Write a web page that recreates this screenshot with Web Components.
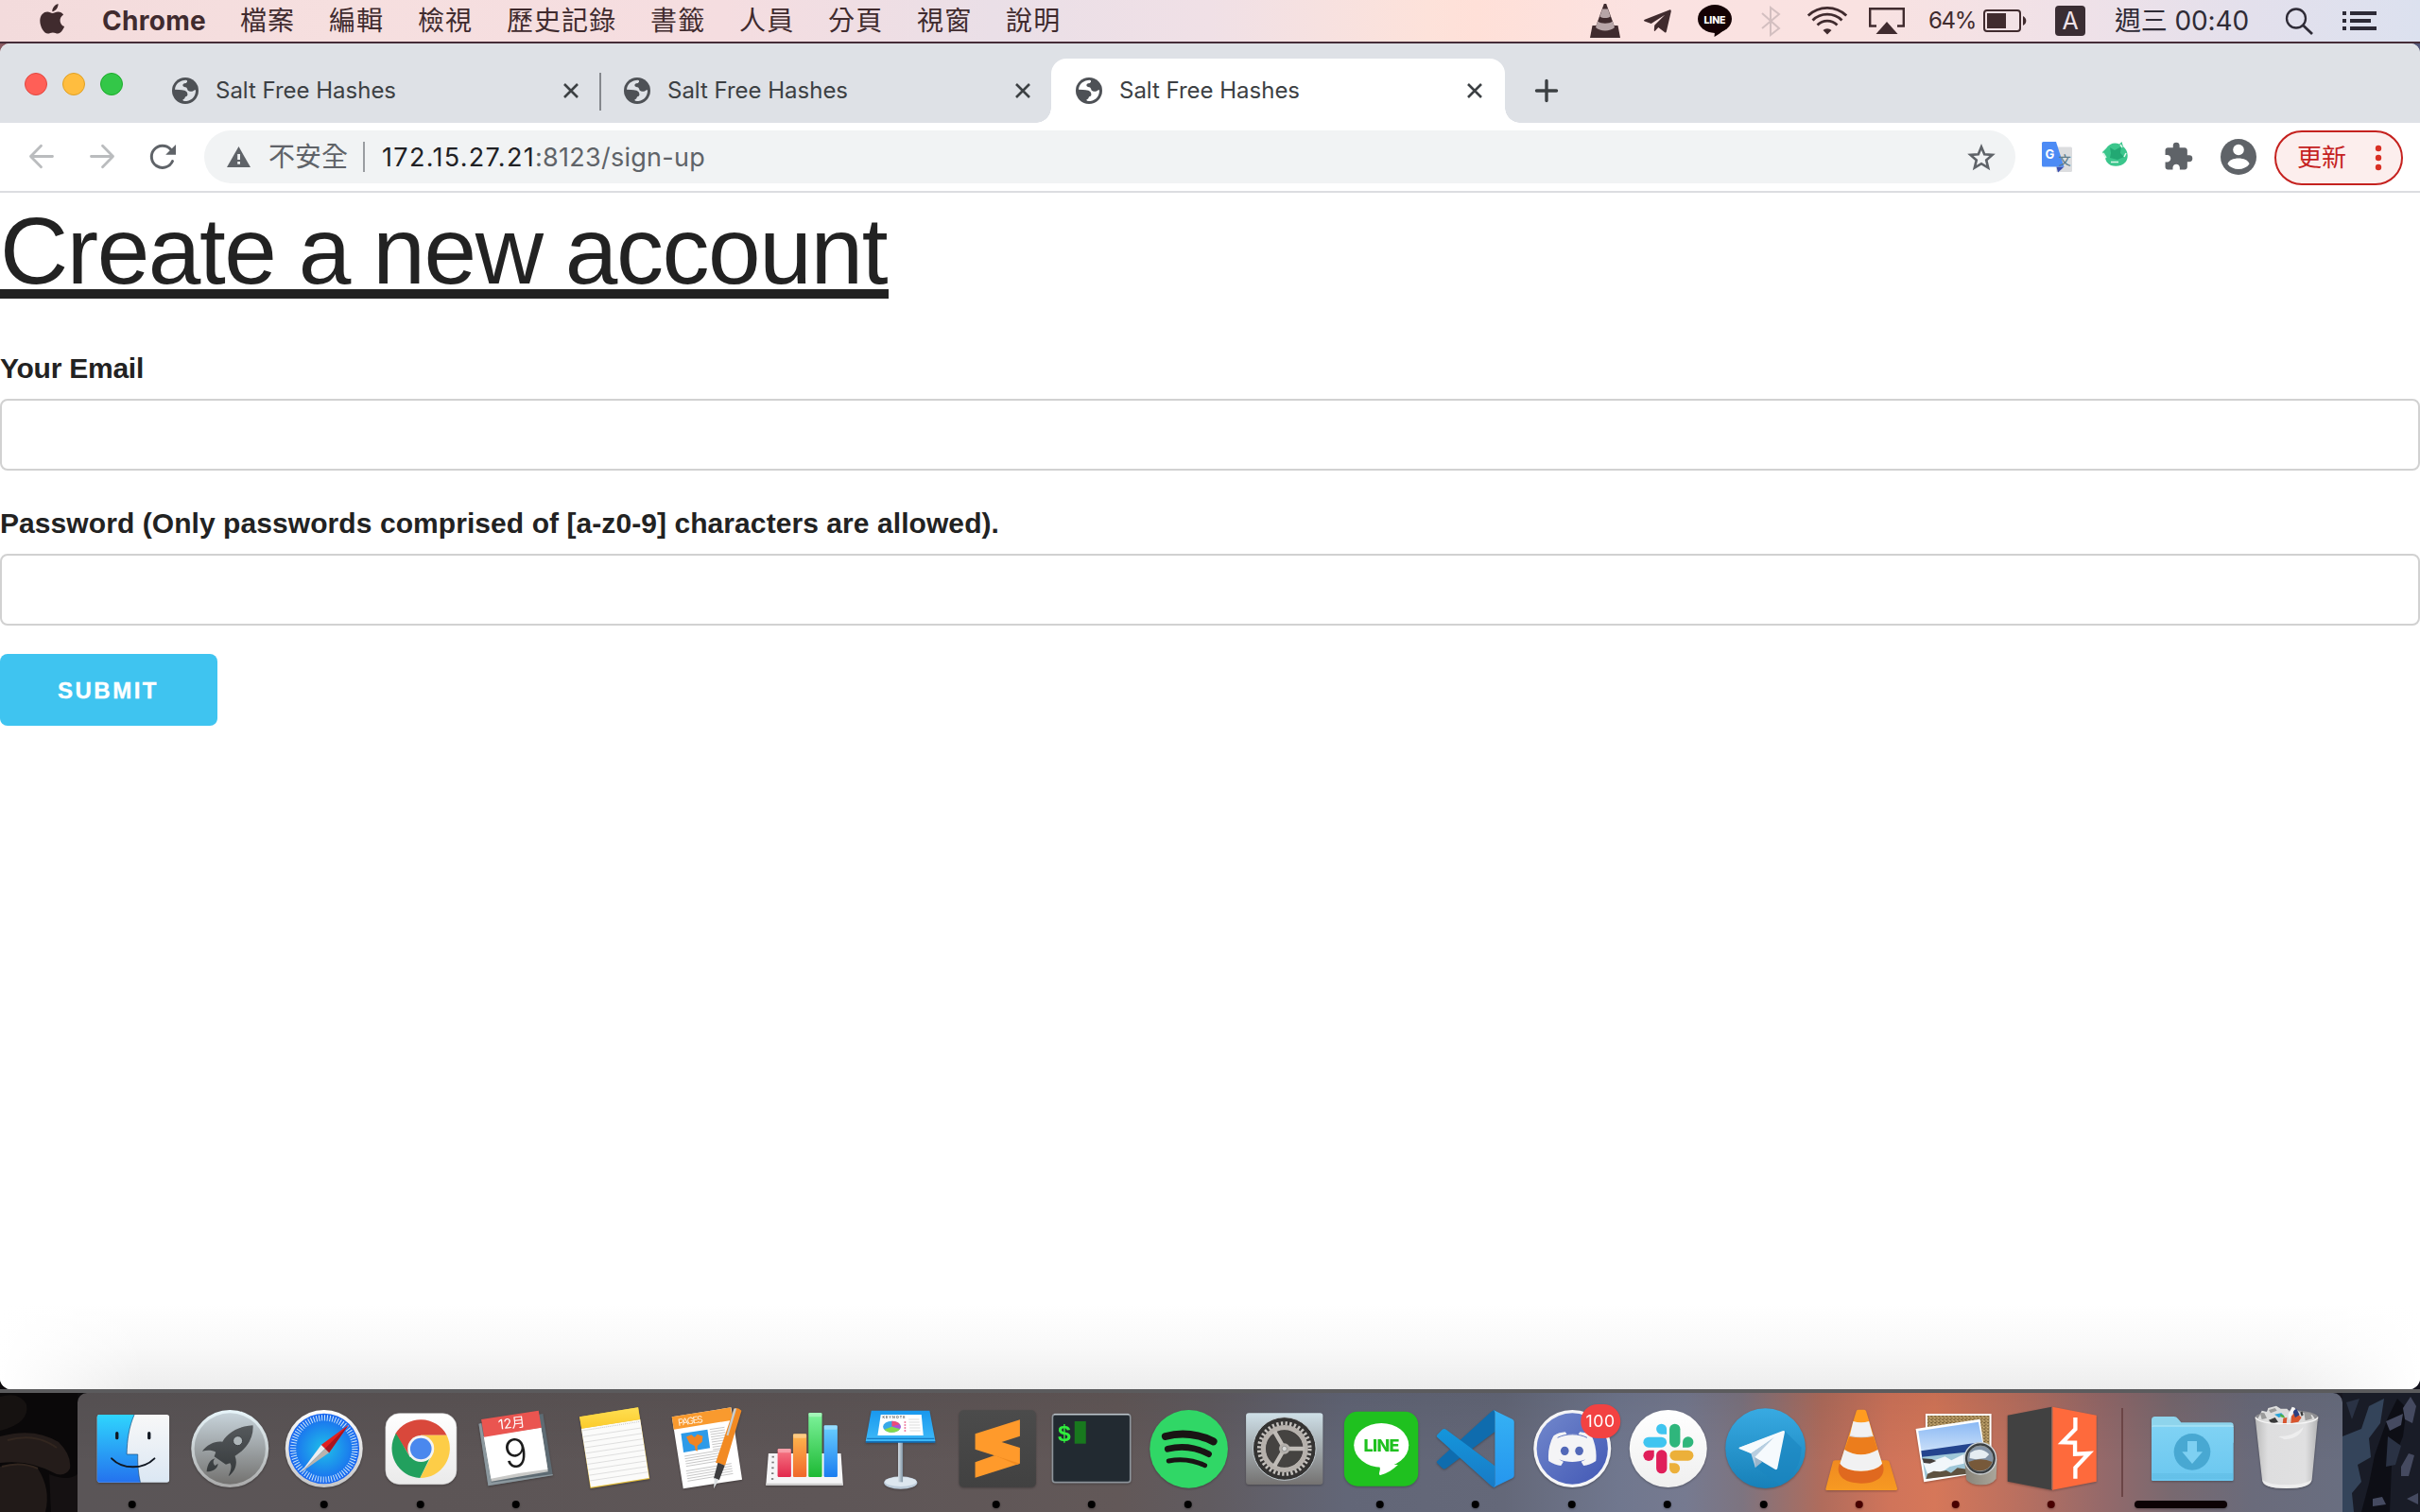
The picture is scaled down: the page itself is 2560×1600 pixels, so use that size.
<!DOCTYPE html>
<html lang="zh-Hant">
<head>
<meta charset="utf-8">
<title>Salt Free Hashes</title>
<style>
html,body{margin:0;padding:0;width:2560px;height:1600px;overflow:hidden;background:#15131a;font-family:Inter,"Noto Sans CJK TC",sans-serif}
</style>
</head>
<body>
<desk-top>
  <menu-bar></menu-bar>
  <browser-window>
    <tab-strip slot="tabs">
      <browser-tab>Salt Free Hashes</browser-tab>
      <browser-tab class="second">Salt Free Hashes</browser-tab>
      <browser-tab class="active">Salt Free Hashes</browser-tab>
    </tab-strip>
    <tool-bar slot="toolbar"></tool-bar>
    <sign-up-form>
      <span slot="title">Create a new account</span>
      <form-field><fit-label w="152">Your Email</fit-label></form-field>
      <form-field><fit-label w="1057">Password (Only passwords comprised of [a-z0-9] characters are allowed).</fit-label></form-field>
    </sign-up-form>
  </browser-window>
  <app-dock></app-dock>
</desk-top>

<script>
const define = (name, html, setup) => customElements.define(name, class extends HTMLElement {
  connectedCallback() {
    if (this.shadowRoot) return;
    this.attachShadow({mode: 'open'}).innerHTML = typeof html === 'function' ? html(this) : html;
    if (setup) setup(this);
  }
});

/* Text fitting waits in a queue until every element is defined and styled. */
const fits = [];
const textWidth = el => {
  const r = document.createRange();
  r.selectNodeContents(el);
  return r.getBoundingClientRect().width;
};
const fit = (source, target, w) => fits.push(() => {
  target.style.letterSpacing = ((w - textWidth(source)) / [...source.textContent].length) + 'px';
});

/* Label whose tracking is adjusted so that the run takes exactly w pixels. */
define('fit-label', el => `<style>:host{display:inline-block;white-space:nowrap;flex:none;width:${el.getAttribute('w')}px}</style><slot></slot>`, el => fit(el, el, +el.getAttribute('w')));

const globe = x => `<g transform="translate(${x - 196} 0) scale(.33333)"><circle cx="588" cy="288" r="42" fill="#4e5156"/><path fill="var(--hole,#dee1e6)" d="M555 284C556 267 571 254 591 254q5 1 3 6-3 5-9 5-5 1-5 6 0 4 5 5 8 0 9 5 1 6 5 8 8 3 14 0 4-4 8-3C622 303 611 319 592 321q-11 1-12-3 0-3 4-4 3-2 3-5 1-3 6-4 3-2 2-8-1-7-9-10-8-2-17-2z"/></g>`;

/* View boxes are given in desktop coordinates. */
const ICONS = {
  apple: ['42 0 26 44', `<path fill="#402b2e" d="M55.300 12.200c-.200-3.600 2.800-7.500 6.200-8.200.400 3.800-2.700 8-6.200 8.200zM55.500 13.900c1.600 0 3.400-1.500 6-1.500 2.400 0 4.300 1.200 5.600 3-5.200 3.200-4.400 10.600 1 12.700-1.200 3.100-3.900 7.500-6.900 7.500-2 0-2.900-1.200-5.300-1.200s-3.400 1.200-5.300 1.200C46.700 35.600 42.300 28.500 42.300 22c0-6.300 3.900-9.600 7.800-9.600 2.300 0 4 1.500 5.400 1.500z"/>`],
  vlcMenu: ['1682 0 32 44', `<path fill="#402b2e" d="M1696.800 4h2.400l8.300 23h4l2.500 13h-32l2.500-13h4z"/><path fill="#b7a5a7" d="M1695 9.500h6l2.600 8c-3 2-8.200 2-11.200 0zM1690 22.500c4 3 12 3 16 0l2 6.500c-4.500 4.500-15.500 4.500-20 0z"/>`],
  tgMenu: ['1738 0 30 44', `<path fill="#402b2e" d="M1766 10.500q2-.6 1.800 1.500l-5 21.500q-.6 1.600-2 .4l-6.500-5-3.500 3.800q-1 .7-1-1l.4-5 11-11-14.500 9.200-7-2.400q-1.800-.9.100-1.800z"/>`],
  lineMenu: ['1796 0 36 44', `<ellipse cx="1814" cy="20" rx="18" ry="15" fill="#150204"/><path fill="#150204" d="M1825 30c-3 4-8 7-11.500 9l.5-6z"/><text x="1814" y="24.500" text-anchor="middle" font-family="Inter" font-weight="800" font-size="10.500" textLength="23" fill="#fff">LINE</text>`],
  bt: ['1863 0 20 44', `<path fill="none" stroke="#d3bfc0" stroke-width="2" d="M1864 14l18 16-9 7V8l9 7-18 15"/>`],
  wifi: ['1912 0 42 44', `<g fill="none" stroke="#402b2e" stroke-width="2.800"><path d="M1912.800 16.500a29 29 0 0 1 40.400 0M1917.500 21.500a22 22 0 0 1 31 0M1922.500 26.500a15 15 0 0 1 21 0"/></g><path fill="#402b2e" d="M1928.500 32a6.500 6.500 0 0 1 9 0l-4.500 4.500z"/>`],
  airplay: ['1977 0 38 44', `<path fill="none" stroke="#402b2e" stroke-width="2.400" d="M1985 27.500h-6.800V9.200h35.600v18.300h-6.800"/><path fill="#402b2e" d="M1996 23l11.500 13h-23z"/>`],
  battery: ['2098 0 43 44', `<rect x="2099" y="11" width="38" height="22" rx="3" fill="none" stroke="#402b2e" stroke-width="2"/><path fill="#402b2e" d="M2102 14h20v16h-20zM2140 17c4.500 2 4.500 8 0 10z"/>`],
  inputA: ['2174 0 32 44', `<rect x="2174" y="6" width="32" height="32" rx="4" fill="#3a2d33"/><text x="2190" y="31" text-anchor="middle" font-family="Inter" font-size="25" fill="#f0e2e8">A</text>`],
  search: ['2418 0 29 44', `<circle cx="2429" cy="19.500" r="10" fill="none" stroke="#2e2b36" stroke-width="2.300"/><path stroke="#2e2b36" stroke-width="2.800" d="M2436 26.500l10 9.500"/>`],
  list: ['2478 0 36 44', `<path fill="#2c2a36" d="M2478 12h4v4h-4zM2486 12h28v4h-28zM2478 20h4v4h-4zM2486 20h22v4h-22zM2478 28h4v4h-4zM2486 28h28v4h-28z"/>`],
  globe: ['182 62 28 68', globe(196)],
  close: ['596 62 16 68', `<path stroke="#3c4043" stroke-width="2.600" d="M597 89l14 14M611 89l-14 14"/>`],
  plus: ['1624 62 24 68', `<path stroke="#3c4043" stroke-width="3.400" stroke-linecap="round" d="M1636 85.500v21M1625.500 96h21"/>`],
  back: ['30 130 28 72', `<path fill="none" stroke="#babcbe" stroke-width="2.800" stroke-linecap="round" stroke-linejoin="round" d="M55.500 165.500H32.500M43.500 154.300l-11 11.200 11 11.200"/>`],
  forward: ['94 130 28 72', `<path fill="none" stroke="#babcbe" stroke-width="2.800" stroke-linecap="round" stroke-linejoin="round" d="M96.500 165.500h23M108.500 154.300l11 11.200-11 11.200"/>`],
  reload: ['158 130 29 72', `<path fill="none" stroke="#5f6368" stroke-width="3" stroke-linecap="round" d="M182.500 170.500a11.600 11.600 0 1 1-2-12.500"/><path fill="#5f6368" d="M186 153v10.800h-10.800z"/>`],
  warn: ['240 130 25 72', `<path fill="#5f6368" d="M252.500 155l12.500 22h-25z"/><path fill="#f1f3f4" d="M251.200 163h2.800v6h-2.800zM251.200 171h2.800v2.800h-2.800z"/>`],
  star: ['2082 130 29 72', `<path fill="none" stroke="#5f6368" stroke-width="2.600" d="M2096 155.500l3.200 7.700 8.400.7-6.400 5.500 2 8.200-7.200-4.400-7.200 4.400 2-8.200-6.400-5.500 8.400-.7z"/>`],
  translate: ['2160 130 32 72', `<path fill="#dcdddf" d="M2172 155.500h18.500q1.500 0 1.500 1.500v23.500q0 1.500-1.500 1.500h-15z"/><path fill="#3a4fb0" d="M2175.500 176.500h8l-6.500 6z"/><path fill="#4c8bf5" d="M2161.500 150h13.500l8.500 26.500h-22q-1.500 0-1.500-1.500v-23.500q0-1.500 1.500-1.500z"/><text x="2163.500" y="167.500" font-family="Inter" font-weight="700" font-size="13" fill="#fff">G</text><text x="2177.800" y="174" font-family="Noto Sans CJK TC" font-weight="500" font-size="13" fill="#607d8b">文</text>`],
  green: ['2224 130 28 72', `<path fill="#3bc68c" d="M2228 157c3-5 9-7 14-4.500l2.500-2.500 1.500 5c5 4 6 11 3 16-4 5-11 5.500-16 4-4-2-6-5-6-9l-3-5z"/><path fill="#22a873" d="M2232 156l5 3 7-4-1 7 4 4-7 3-8-2 1-5z"/><path stroke="#d9f6e8" stroke-width="1.600" fill="none" d="M2225 162l3 5M2233 171.500h8M2247 166l2-4M2243 153l2 3"/>`],
  puzzle: ['2290 130 29 72', `<path fill="#5f6368" transform="translate(2287.800 149.300) scale(1.370)" d="M20.500 11H19V7c0-1.100-.9-2-2-2h-4V3.500a2.500 2.500 0 0 0-5 0V5H4c-1.100 0-2 .9-2 2v3.800h1.500c1.500 0 2.700 1.200 2.700 2.700S5 16.200 3.500 16.200H2V20c0 1.100.9 2 2 2h3.800v-1.500c0-1.500 1.200-2.700 2.700-2.700s2.700 1.200 2.700 2.700V22H17c1.100 0 2-.9 2-2v-4h1.500a2.500 2.500 0 0 0 0-5z"/>`],
  avatar: ['2349 130 38 72', `<circle cx="2368" cy="166" r="19" fill="#5f6368"/><circle cx="2368" cy="158.500" r="5.800" fill="#fff"/><path fill="#fff" d="M2356.500 173.500c2-8 21-8 23 0-5 7.300-18 7.300-23 0z"/>`],
  dots: ['2512 138 8 56', `<g fill="#d93025"><circle cx="2516" cy="156" r="3.200"/><circle cx="2516" cy="166" r="3.200"/><circle cx="2516" cy="176" r="3.200"/></g>`]
};

define('ui-icon', el => {
  const [vb, body] = ICONS[el.getAttribute('name')];
  const [, , w, h] = vb.split(' ');
  return `<style>:host{display:block;flex:none;width:${w}px;height:${h}px}svg{display:block;overflow:visible}</style><svg width="${w}" height="${h}" viewBox="${vb}">${body}</svg>`;
});

define('desk-top', `<style>
:host{display:flex;flex-direction:column;width:2560px;height:1600px;background:linear-gradient(90deg,#8a5a60 0,#402a35 5%,#2b2633 60%,#53587a 100%)}
</style><slot></slot>`);

define('menu-bar', `<style>
:host{display:flex;align-items:center;height:44px;flex:none;color:#402b2e;font:27px/44px Inter,"Noto Sans CJK TC",sans-serif;
 background:linear-gradient(90deg,#f3dbdc 0,#f6dfdf 14%,#f5dde0 30%,#eadfe7 41%,#f0e0e6 50%,#fde2da 59%,#ffe0d8 61%,#fbe2e1 68%,#f9e2e1 77%,#efe1e8 86%,#e3e0ec 93%,#dce1ef 100%);border-bottom:2px solid #452c38}
.left,.right{display:flex;height:44px}.left{padding-left:42px}.right{margin-left:auto;padding-right:46px}
.app{font-weight:700;font-size:28px;margin:0 36px 0 40px}
nav{display:flex;gap:35.900px}nav span{letter-spacing:1.050px;font-size:28px}
.pct{font-size:24px;margin-left:25px}.clock{margin-left:31px;color:#2f2b36;font-size:28px}
</style>
<div class="left"><ui-icon name="apple"></ui-icon><fit-label class="app" w="110">Chrome</fit-label>
<nav><span>檔案</span><span>編輯</span><span>檢視</span><span>歷史記錄</span><span>書籤</span><span>人員</span><span>分頁</span><span>視窗</span><span>說明</span></nav></div>
<div class="right"><ui-icon name="vlcMenu"></ui-icon><ui-icon name="tgMenu" style="margin-left:24px"></ui-icon><ui-icon name="lineMenu" style="margin-left:28px"></ui-icon><ui-icon name="bt" style="margin-left:31px"></ui-icon><ui-icon name="wifi" style="margin-left:29px"></ui-icon><ui-icon name="airplay" style="margin-left:23px"></ui-icon><fit-label class="pct" w="50">64%</fit-label><ui-icon name="battery" style="margin-left:8px"></ui-icon><ui-icon name="inputA" style="margin-left:33px"></ui-icon><fit-label class="clock" w="142">週三 00:40</fit-label><ui-icon name="search" style="margin-left:39px"></ui-icon><ui-icon name="list" style="margin-left:31px"></ui-icon></div>`);

define('browser-window', `<style>
:host{display:flex;flex-direction:column;height:1424px;flex:none;background:#fff;border-radius:10px 10px 12px 12px;overflow:hidden;position:relative;z-index:1}
::slotted(sign-up-form){flex:1}
.shade{height:90px;margin-top:-90px;background:linear-gradient(90deg,#fff 0,#fff0 6%,#fff0 94%,#fff 100%),linear-gradient(#fff0,#f9f9f9 50%,#ededed)}
</style><slot name="tabs"></slot><slot name="toolbar"></slot><slot></slot><div class="shade"></div>`);

define('tab-strip', `<style>
:host{display:flex;height:84px;flex:none;background:#dee1e6;align-items:flex-end}
.lights{display:flex;gap:16px;padding-left:26px;width:132px;height:82px;align-items:center;align-self:flex-start;padding-top:4px;box-sizing:border-box}
i{width:24px;height:24px;border-radius:50%;box-sizing:border-box;flex:none}
.r{background:#ff5f57;border:1px solid #e2463f}.y{background:#ffbd3f;border:1px solid #dfa023}.g{background:#33c748;border:1px solid #1dad2b}
.tabs{display:flex;padding-left:24px}
ui-icon{margin-left:32px}
</style><div class="lights"><i class="r"></i><i class="y"></i><i class="g"></i></div><div class="tabs"><slot></slot></div><ui-icon name="plus"></ui-icon>`);

define('browser-tab', `<style>
:host{display:flex;width:478px;height:68px;align-items:center;box-sizing:border-box;padding-left:26px;color:#3c4043;font:24px/67px Inter,sans-serif;position:relative}
:host(.second){padding-left:24px;border-left:2px solid;border-image:linear-gradient(transparent 15px,#85888d 15px,#85888d 55px,transparent 55px) 0 0 0 2}
:host(.active){width:480px;background:#fff;border-radius:16px 16px 0 0;--hole:#fff}
:host(.active)::before,:host(.active)::after{content:"";position:absolute;bottom:0;width:16px;height:16px}
:host(.active)::before{left:-16px;background:radial-gradient(circle at 0 0,transparent 15.500px,#fff 16px)}
:host(.active)::after{right:-16px;background:radial-gradient(circle at 100% 0,transparent 15.500px,#fff 16px)}
.t{margin-left:18px;width:192px;white-space:nowrap;height:68px;line-height:67px}
.x{margin-left:176px}
</style><ui-icon name="globe"></ui-icon><span class="t"><slot></slot></span><ui-icon class="x" name="close"></ui-icon>`, el => fit(el, el.shadowRoot.querySelector('.t'), 191));

define('tool-bar', `<style>
:host{display:flex;height:72px;flex:none;align-items:center;background:#fff;border-bottom:2px solid #dcdde1;padding-left:30px;font:27px/57px Inter,"Noto Sans CJK TC",sans-serif;box-sizing:content-box}
.box{display:flex;align-items:center;width:1916px;height:56px;margin-left:29px;background:#f1f3f4;border-radius:28px;box-sizing:border-box;padding-left:24px}
.ns{color:#5f6368;font-size:28px;margin-left:19px}
.sep{width:2px;height:32px;background:#9a9da1;margin:0 18px 0 16px}
.host{color:#202124}.path{color:#5f6368}
.host,.path{height:56px;line-height:58px}
.star{margin-left:auto;margin-right:21px}
.upd{display:flex;align-items:center;width:136px;height:58px;margin:2px 0 0 19px;box-sizing:border-box;border:2px solid #c5221f;border-radius:29px;background:#fceeed;color:#c5221f;padding-left:22px;font:26px/52px Inter,"Noto Sans CJK TC",sans-serif}
</style><ui-icon name="back"></ui-icon><ui-icon name="forward" style="margin-left:36px"></ui-icon><ui-icon name="reload" style="margin-left:36px"></ui-icon>
<div class="box"><ui-icon name="warn"></ui-icon><fit-label class="ns" w="84">不安全</fit-label><span class="sep"></span><fit-label class="host" w="162">172.15.27.21</fit-label><fit-label class="path" w="180">:8123/sign-up</fit-label><ui-icon class="star" name="star"></ui-icon></div>
<ui-icon name="translate" style="margin-left:28px"></ui-icon><ui-icon name="green" style="margin-left:32px"></ui-icon><ui-icon name="puzzle" style="margin-left:38px"></ui-icon><ui-icon name="avatar" style="margin-left:30px"></ui-icon>
<div class="upd"><fit-label w="52">更新</fit-label><ui-icon name="dots" style="margin-left:30px"></ui-icon></div>`);

define('sign-up-form', `<style>
:host{display:block;font-family:"Liberation Sans",sans-serif;color:#222}
h1{margin:0;height:168px;padding-top:11px;box-sizing:border-box;font-size:100px;line-height:100px;font-weight:400;white-space:nowrap;word-spacing:-2px}
.u{display:block;height:91px;border-bottom:10px solid #222;width:940px}
button{display:block;margin:30px 0 0;width:230px;height:76px;border:0;border-radius:8px;background:#3fc4f0;color:#fff;font:700 24px/76px "Liberation Sans",sans-serif;padding:1px 0 0 61px;text-align:left;-webkit-text-stroke:.4px #fff}
</style><h1><span class="u"><slot name="title"></slot></span></h1><slot></slot><button><fit-label w="107">SUBMIT</fit-label></button>`, el => fit(el.querySelector('[slot=title]'), el.shadowRoot.querySelector('.u'), 938));

define('form-field', `<style>
:host{display:block;height:126px;margin-bottom:38px;font:700 30px/36px "Liberation Sans",sans-serif}
:host(:last-of-type){margin-bottom:0}
label{display:block;height:50px}
input{display:block;width:100%;height:76px;box-sizing:border-box;border:2px solid #d1d1d1;border-radius:8px;background:#fff;margin:0}
</style><label><slot></slot></label><input>`);

/* Dock drawings, at three units to the pixel; ox is the left edge of each drawing's origin. */
const P = (fill, d, more = '') => `<path fill="${fill}" d="${d}" ${more}/>`;
const LG = (id, a, b, v = 'x2="0" y2="1"') => `<linearGradient id="${id}" ${v}><stop stop-color="${a}"/><stop offset="1" stop-color="${b}"/></linearGradient>`;
const lines = (x1, y1, x2, y2, n, dx, dy, c, w) => Array.from({length: n}, (_, i) => `<path stroke="${c}" stroke-width="${w}" d="M${x1 + dx * i} ${y1 + dy * i}L${x2 + dx * i} ${y2 + dy * i}"/>`).join('');
const APPS = [
 [0, 1, LG('a', '#2fd5fd', '#2472ee') + LG('b', '#f8f8f8', '#dbe7f3') + `<rect x="309" y="111" width="229" height="215" rx="8" fill="url(#b)"/>` + P('url(#a)', 'M317 111H427C410 150 404 190 403 237H438C437 270 440 300 446 326H317q-8 0-8-8V119q0-8 8-8z') + `<path d="M427 111C410 150 404 190 403 237H438C437 270 440 300 446 326" fill="none" stroke="#174a78" stroke-width="2"/><path d="M355 250c35 36 100 36 136 0" stroke="#111822" stroke-width="6" fill="none" stroke-linecap="round"/><path d="M372 170v15M474 170v15" stroke="#111822" stroke-width="10" stroke-linecap="round"/>`],
 [0, 0, LG('a', '#c7d3da', '#737270') + LG('b', '#e8f6fb', '#a9a9a9') + LG('c','#55595c','#34383a')+`<circle cx="729" cy="219" r="123" fill="url(#b)"/><circle cx="729" cy="219" r="113" fill="url(#a)"/>` + P('url(#c)', 'M802 145c-40 2-78 20-97 52-25-3-46 8-64 30 17-4 33-3 43 3l-5 14 37 25 13-4c8 10 1 28-5 42 23-17 30-42 21-65 35-20 60-56 57-97zM682 250c-18 4-25 22-27 42 20-1 36-10 36-26l-9 7c-7-6-8-16 0-23z') + `<circle cx="754" cy="194" r="15" fill="#aeb6b9" stroke="#3b3f42" stroke-width="3"/>`],
 [0, 1, `<radialGradient id="a"><stop stop-color="#1fc0e8"/><stop offset="1" stop-color="#1a66f0"/></radialGradient>` + LG('b','#fdfdfd','#c6c6c6') + `<circle cx="1029" cy="219" r="123" fill="url(#b)"/><circle cx="1029" cy="219" r="112" fill="url(#a)"/><circle cx="1029" cy="219" r="98" fill="none" stroke="#cfe6fa" stroke-width="19" stroke-dasharray="3 5.552"/>` + P('#e02020', 'M1107 143L1020 207l25 25z') + P('#a81420', 'M1107 143L1032 219l13 13z') + P('#eeeef0', 'M955 295L1020 207l12 12z') + P('#b9b3ae', 'M955 295L1045 232l-13-13z')],
 [0, 1, LG('a','#fff','#eaeaea') + `<rect x="1223" y="107" width="225" height="225" rx="44" fill="url(#a)" stroke="#d6d6d6" stroke-width="2"/>` + P('#d9483b', 'M1254 172A94 94 0 0 1 1417 176H1335L1298 240z') + P('#fdcd47', 'M1417 176A94 94 0 0 1 1332 312L1370 240 1335 176z') + P('#22a05e', 'M1256 170A94 94 0 0 0 1332 312L1365 245H1300z') + `<circle cx="1335" cy="219" r="42" fill="#f4f4f4"/><circle cx="1335" cy="219" r="34" fill="#4a88ee"/>`],
 [480, 1, P('#5e6b73', 'M80 140L284 108 315 303 110 337z') + P('#8c989e','M80 140L88 138 120 326 315 300 315 304 110 337z') + P('#c9c9c7', 'M96 180L278 152 300 292 120 323z') + P('#fff', 'M96 180L278 152 299 284q-90 10-180 30z') + P('#ea5550', 'M88 126L270 98 279 152 97 182z') + `<g transform="rotate(-7 186 150)"><text x="186" y="153" text-anchor="middle" font-family="Inter,'Noto Sans CJK TC'" font-size="43" textLength="86" fill="#fff">12月</text></g><g transform="rotate(-7 198 235)"><text x="198" y="278" text-anchor="middle" font-family="Inter" font-weight="300" font-size="125" fill="#1c1c1c">9</text></g>`],
 [480, 0, LG('a','#ffdf52','#fbcb2c') + P('#e2bd3a', 'M399 118L585 88 621 315 433 345z') + P('#fbfbfa', 'M404 155L591 126 619 312 434 341z') + P('url(#a)', 'M398 118L584 88 590 126 405 155z') + `<path d="M406 162l184-29" stroke="#aaa" stroke-width="2" stroke-dasharray="3 3"/>` + lines(410, 181, 594, 153, 9, 2.7, 17.5, '#d0d0d0', 2)],
 [480, 0, P('#fff', 'M693 118L881 88 916 317 729 346z') + P('#f99a2e', 'M693 118L880 88 886 128 699 158z') + `<g transform="rotate(-8.500 752 130)"><text x="752" y="141" text-anchor="middle" font-family="Inter" font-size="30" textLength="80" fill="#fff3e2">PAGES</text></g>` + P('#2e9be8', 'M722 171L806 158 814 217 730 231z') + P('#f08422', 'M741 180l14-5 10 8 9-10 17 6-2 18-15 13v17l-6-3-3-14-16-8-10-20z') + lines(813, 158, 860, 151, 9, 1.3, 8, '#aaa', 2) + lines(733, 243, 860, 222, 5, 1.3, 8, '#aaa', 2) + lines(738, 290, 882, 266, 5, 1.3, 8, '#aaa', 2) + P('#f28a22', 'M890 92q12-6 24 6L862 272l-30-9z') + P('#c5ced3','M890 92q4-3 8 0L872 178l-6-2z') + P('#3d3d3f', 'M839 263l22 9-18 47-17-6z') + P('#dde1e3', 'M828 312l14 5-16 29z')],
 [480, 0, P('#f5f5f6', 'M998 234H1228L1235 335H990z') + P('#ccc','M990 329H1235v6H990z') + [[1027,219,'#f77a86','#e2284c'],[1076,172,'#ffb84f','#f0682a'],[1125,105,'#7ef39c','#1db934'],[1174,145,'#6bd0ff','#1a7df0']].map(([x,y,a,b],i)=>LG('n'+i,a,b)+`<rect x="${x}" y="${y}" width="43" height="${309-y}" rx="4" fill="url(#n${i})"/><rect x="${x+1}" y="${y}" width="41" height="13" rx="3" fill="#fff" opacity=".3"/>`).join('') + lines(1009,245,1016,245,5,-.5,17.500,'#777',5)],
 [480, 0, LG('a','#1998ee','#3db9f8') + LG('b','#d6e0e8','#8195a5','') + `<ellipse cx="1419" cy="327" rx="53" ry="20" fill="#bccbd9"/><ellipse cx="1419" cy="324" rx="50" ry="15" fill="#dde7ef"/><rect x="1411" y="195" width="15" height="130" fill="url(#b)"/>` + P('url(#a)', 'M1326 98H1511L1529 195H1308z') + P('#116fb8','M1308 195H1529v5H1308z') + `<path d="M1312 187H1526" stroke="#167dc5" stroke-width="4"/>` + P('#fff', 'M1356 111H1485L1491 177H1346z') + `<text x="1361" y="123" font-family="Inter" font-weight="600" font-size="11" textLength="72" fill="#555">KEYNOTE</text><ellipse cx="1391" cy="149" rx="28" ry="18" fill="#38a9e8"/><path fill="#ee4a7a" d="M1391 149v-18a28 18 0 0 1 26 11z"/><path fill="#b24fd4" d="M1391 149l26-7a28 18 0 0 1 0 14z"/><path fill="#86d84a" d="M1391 149l26 8a28 18 0 0 1-50 1z"/><path stroke="#ea5b87" stroke-width="5" stroke-dasharray="4 5" d="M1433 133v34"/>` + lines(1444, 126, 1478, 126, 5, 1, 9, '#ccc', 2)],
 [960, 1, LG('a','#4b4b4b','#414141') + `<rect x="163" y="97" width="244" height="244" rx="14" fill="url(#a)"/>` + P('#ff9a2b', 'M214 262L276 240 356 266 214 311z') + P('#f18b20','M276 240L300 232 356 266 345 270z') + P('#ff9a2b', 'M214 172L356 127V179L298 198 356 216V266L214 221z')],
 [960, 1, `<rect x="461" y="110" width="247" height="216" rx="9" fill="#222a31" stroke="#8d949b" stroke-width="5"/><path d="M466 110H703" stroke="#bcc5cb" stroke-width="4"/><text x="476" y="194" font-family="Liberation Mono" font-weight="700" font-size="74" fill="#30ee3d">$</text><rect x="531" y="132" width="36" height="71" fill="#18781e"/>`],
 [960, 1, `<circle cx="892" cy="220" r="124" fill="#30d766"/><g fill="none" stroke="#191414" stroke-linecap="round"><path stroke-width="24" d="M818 180c52-14 108-7 152 16"/><path stroke-width="20" d="M825 220c44-11 90-5 130 16"/><path stroke-width="15" d="M828 258c40-8 78-3 115 14"/></g>`],
 [960, 0, LG('a','#cfe0e8','#747271') + `<rect x="1075" y="106" width="244" height="227" rx="9" fill="url(#a)"/><circle cx="1197" cy="219" r="100" fill="#343332" stroke="#c2cbd0" stroke-width="3"/><circle cx="1197" cy="219" r="80" fill="none" stroke="#c4c1bd" stroke-width="13" stroke-dasharray="7 6.963"/><circle cx="1197" cy="219" r="67" fill="none" stroke="#b6b1ac" stroke-width="16"/><circle cx="1197" cy="219" r="58" fill="#454341"/><g stroke="#c0bcb7" stroke-width="13"><path d="M1197 219H1261M1197 219L1165 164M1197 219L1165 274"/></g><circle cx="1197" cy="219" r="17" fill="#b4b0ac"/><circle cx="1197" cy="219" r="8" fill="#d8d8d6" stroke="#777" stroke-width="2"/>`],
 [1440, 1, `<rect x="-55" y="101" width="235" height="237" rx="42" fill="#1fc11f"/><ellipse cx="63" cy="208" rx="87" ry="70" fill="#fff"/><path fill="#fff" d="M56 270h60c-15 15-35 27-56 33q-5 0-4-5l3-14q1-8-5-14z"/><text x="64" y="229" text-anchor="middle" font-family="Inter" font-weight="800" font-size="54" textLength="114" fill="#1fc11f">LINE</text>`],
 [1440, 1, LG('a','#35b1f4','#2596ee') + LG('b','#1496dc','#187ac5')+ P('#0f6cae','M242 258L412 103q6-6 13-7V165L270 281q-7 5-13-1l-14-14q-5-5-1-8z') + P('url(#b)', 'M242 183q-4-5 1-9l14-15q7-5 13-1L425 274V342q-7 0-13-6z') + P('url(#a)', 'M420 96L480 125q6 3 6 9V304q0 6-6 9L420 342q5-3 5-10V106q0-7-5-10z')],
 [1440, 1, LG('a','#7288cc','#4258b5','x2="1" y2="1"') + `<circle cx="669" cy="219" r="123" fill="#f5f5f7"/><circle cx="669" cy="219" r="113" fill="url(#a)"/><path fill="#f4f4f6" d="M610 178c12-8 24-11 37-12l5 8q18-3 36 0l5-8c13 1 25 4 37 12 13 26 17 56 14 80-13 9-27 14-39 15l-8-13q7-2 14-7c-25 11-60 11-84 0q7 5 14 7l-8 13c-12-1-26-6-39-15-3-24 1-55 16-80z"/><path fill="none" stroke="#6076c2" stroke-width="3" d="M622 184c28-14 66-14 94 0"/><ellipse cx="645" cy="226" rx="13" ry="14" fill="#5268b8"/><ellipse cx="691" cy="226" rx="13" ry="14" fill="#5268b8"/><rect x="696" y="78" width="126" height="108" rx="54" fill="#f24242"/><text x="758" y="151" text-anchor="middle" font-family="Inter" font-size="53" textLength="92" fill="#fff">100</text>`],
 [1440, 1, LG('a','#fff','#efefef') + `<circle cx="975" cy="219" r="123" fill="url(#a)"/><rect x="896" y="182" width="74" height="33" rx="16.500" fill="#3fc5f0"/><path fill="#3fc5f0" d="M970 173h-17a16.500 16.500 0 1 1 17-17z"/><rect x="979" y="140" width="34" height="75" rx="17" fill="#2fb67c"/><path fill="#2fb67c" d="M1021 215v-17a17 17 0 1 1 17 17z"/><rect x="937" y="223" width="34" height="75" rx="17" fill="#e01e5a"/><path fill="#e01e5a" d="M930 224v17a17 17 0 1 1-17-17z"/><rect x="980" y="224" width="75" height="33" rx="16.500" fill="#ecb03a"/><path fill="#ecb03a" d="M979 265h17a16.500 16.500 0 1 1-17 17z"/>`],
 [1440, 1, LG('a','#38aae2','#1780b8') + `<circle cx="1282" cy="218" r="127" fill="url(#a)"/>` + P('#1a86c0','M1343 163L1396 215Q1395 290 1330 335L1250 278z','opacity=".6"') + P('#cadbe9', 'M1198 216L1343 162 1236 234z') + P('#b8cee0','M1236 234L1310 183 1250 279z') + P('#f6fafd', 'M1199 215q-3 3 1 5l36 14 74-52-62 64 0 0 64 38q6 4 8-3l23-113q1-8-7-5z')+P('#9ab5cb','M1248 246L1272 261 1250 279z')],
 [1900, 1, LG('a','#ff9f1e','#ea6f1b') + LG('b','#f08a20','#f79a22')+ P('url(#b)', 'M117 262q1-6 8-6H288q7 0 9 6L322 346q1 5-4 5H99q-6 0-4-5z') + P('#e0691f','M142 262c-15 20-12 66 64 67s80-45 66-67z') + P('#ff9c20', 'M192 100q1-5 6-5h19q4 0 6 5l51 166c-20 32-115 32-134 0z') + P('#f1f1f2', 'M182 132q25 7 50 0l14 50q-38 8-76 0z')+ P('#d8d8da','M172 176q35 9 72 0l2 8q-38 8-76 0z') + P('#ec7d1c', 'M170 180q37 8 76 0l14 45q-49 25-106 0z') + P('#f1f1f2', 'M154 222q52 32 106 0l14 44c-20 32-115 32-134 0z')],
 [1900, 1, `<pattern id="p" width="12" height="10" patternUnits="userSpaceOnUse"><rect width="12" height="10" fill="#a68955"/><path fill="#4e3b1f" d="M1 1h3v3H1zM7 5h4v3H7z"/><path fill="#dec18a" d="M5 0h4v3H5zM1 6h4v3H1z"/></pattern>` + LG('a','#8ab9f5','#cadff8') + `<rect x="413" y="111" width="203" height="170" fill="url(#p)" stroke="#fff" stroke-width="6"/>` + P('#fff','M379 156L583 125 606 292 405 325z') + P('url(#a)', 'M387 163L578 134 591 200 397 228z') + P('#24448e', 'M396 226L588 198 592 225 400 254z') + P('#9fc7d8', 'M399 245L592 224 598 285 410 316z') + P('#f1f6fa','M402 262l40-8 30-10 20 12 40-20v30l-45 10-30 20-40 5z') + P('#5e5240', 'M412 315l4-16 20-9 20 2 20-4 15 8 20-16 30 4v15z')+P('#453f3c','M400 250l30 2 14 6-20 8-20-2z') + LG('c','#888479','#aaa69b','') + P('url(#c)', 'M533 250L540 318q15 17 48 16t46-20l3-62z') + `<circle cx="584" cy="250" r="50" fill="#3b4043" stroke="#ced4d7" stroke-width="4"/><circle cx="584" cy="250" r="40" fill="#8292a5" stroke="#8e9496" stroke-width="3"/>` + P('#e6edf2','M552 232q32-22 60 5l-12 12-30 4-20-4z') + P('#77593a','M546 261q40-16 76 0-10 28-40 28t-36-28z')],
 [1900, 1, P('#414141','M672 113L812 86V350L672 323z') + P('#fe6a3c','M814 86L954 113V323L814 350z') + `<path d="M813 88V348" stroke="#8a6a60" stroke-width="4"/><path d="M887 120V157L846 199 886 200V236L930 234 887 279V314" fill="none" stroke="#fff" stroke-width="13" stroke-linejoin="miter"/>`],
];
const folder = LG('a','#7fd2f4','#6bc7ef') + P('#8ed4ec','M228 128q0-11 11-11H299q8 0 13 7l10 12H479q9 0 9 9V200H228z') + P('#a9e2f5','M229 150q0-5 5-5H484q4 0 4 5z') + P('url(#a)','M228 155q0-6 6-6H482q6 0 6 6V317q0 4-4 4H232q-4 0-4-4z') + lines(229,300,487,300,3,0,6,'#58b4dd',2) + `<circle cx="357" cy="229" r="58" fill="#48a8d2"/>` + P('#7ed0f2','M342 195h30v34h18L357 267 325 229h17z');
const trash = `<linearGradient id="b"><stop stop-color="#bababa"/><stop offset=".2" stop-color="#dededf"/><stop offset=".8" stop-color="#e0e0e1"/><stop offset="1" stop-color="#b4b4b5"/></linearGradient>` + P('#8c8c90','M556 118q20-22 100-22t101 20v16H558z') + P('#dcdcdc','M572 112l6-14 16 4 4-12 26-7 14 9 20 0 8 10 12-14 22 16 18 2 20 6 10 14-6 18-160 4-20-20z') + P('#9a9a9a','M572 104l14 2 8 16-16 4zM600 96l20-6 6 8-20 8zM712 104l20 2 6 18-22 6z') + P('#3a3a3a','M600 128l20-8 10 14-20 6zM700 104l6-4 4 12-6 4z') + P('#28a3d8','M618 110l22-4 8 8-16 6z') + P('#50b03c','M636 108l12 6 4 8-14-4z') + P('#d8552e','M646 122l12-2-2 22-12 0zM672 116l12-14 20 18-10 14-24 4z') + P('#2d3f80','M676 100l12-8 10 20-14 8z') + P('#f6f6f6','M662 110l12-24 10 4-20 38z') + P('url(#b)','M557 121Q600 143 656 143T756 120L737 318q-6 27-81 27t-77-27z') + P('#f4f4f4','M580 318q20 16 76 16t80-16q-4 27-80 27t-76-27z','opacity=".7"') + P('#f6f6f6','M630 180q50 0 80-30-8 35-60 40z','opacity=".6"') + `<path d="M558 119c6 13 40 21 98 21s96-8 100-21" fill="none" stroke="#f8f8f8" stroke-width="4"/>`;
const cell = (x, w, ox, body) => `<svg width="${w}" height="126" viewBox="${x} 1474 ${w} 126"><g transform="translate(${ox} 1460) scale(.33333)">${body}</g></svg>`;

define('dock-item', el => {
  const i = el.getAttribute('item');
  let s;
  if (i === 'folder') s = cell(2258, 110, 2200, folder + '<rect x="174" y="384" width="294" height="24" rx="12" fill="#0c0204"/>');
  else if (i === 'trash') s = cell(2368, 100, 2200, trash);
  else {
    const [ox, run, body] = APPS[i];
    const x = 89.25 + i * 101.5;
    const dot = run ? `<circle cx="${(x + 50.75 - ox) * 3}" cy="396" r="12" fill="${i > 17 ? '#480000' : '#000'}"/>` : '';
    s = cell(x, 101.5, ox, body + dot);
  }
  return `<style>:host{display:flex;flex:none;height:126px}svg{display:block;overflow:visible;filter:drop-shadow(0 1px 1px #0004)}</style>${s}`;
});

define('app-dock', `<style>
:host{display:flex;flex:1;height:130px;margin-top:-12px;padding-top:12px;background:linear-gradient(90deg,#0d0b0d,#161620)}
.edge{display:block;width:82px;height:130px;flex:none}
.mid{flex:none;width:2396px;border-top:4px solid #5b5b5d;display:flex;box-sizing:border-box;height:130px}
.dock{display:flex;align-items:flex-start;width:2396px;height:126px;padding-left:7.250px;box-sizing:border-box;border-radius:10px 10px 0 0;
background:linear-gradient(#0001,#0000 60%),linear-gradient(90deg,#5a5557 0,#5c5556 15%,#5e5657 33%,#625858 46%,#605b60 50%,#626677 56%,#646879 63%,#70778e 68%,#767a90 71%,#7d7480 73.500%,#b06c5c 77%,#d0745a 80%,#d67759 82%,#bb705f 85.500%,#94696a 89.500%,#786970 92.500%,#6a6b7b 96%,#696e80 100%)}
.sep{width:2px;height:94px;margin:16px 12px 0 23.250px;background:#6b4546;flex:none}
</style>
<svg class="edge" viewBox="0 1470 82 130"><rect y="1470" width="82" height="130" fill="#0a0809"/><path fill="#161211" d="M0 1478q20-6 28 8 4 20-28 28z"/><path fill="#241c1a" d="M0 1520q36-10 62 6 14 14 12 28-4 8-14 6-28-16-60-12z"/><path fill="#211a18" d="M0 1552q20-6 40 2 14 22 8 46H0z"/><path fill="#151112" d="M52 1560q20 8 30 0v40H54z"/><path stroke="#32261f" stroke-width="2" fill="none" d="M8 1524q30-8 52 8M2 1552q20-6 38 2"/><rect y="1470" width="82" height="4" fill="#5b5b5d"/></svg>
<div class="mid"><div class="dock">${APPS.map((_, i) => `<dock-item item="${i}"></dock-item>`).join('')}<span class="sep"></span><dock-item item="folder"></dock-item><dock-item item="trash"></dock-item></div></div>
<svg class="edge" viewBox="2478 1470 82 130"><rect x="2478" y="1470" width="82" height="130" fill="#191c27"/><path fill="#34445a" d="M2478 1520l20-8 8-24 16-8-4 26-12 16 2 20-14 8 4 18-10 12 2 20h-12z"/><path fill="#0d0e15" d="M2512 1540l14-40 10-20 10 10-4 30-12 30-2 50h-30l8-30z"/><path fill="#454a60" d="M2542 1490l8-12 6 10-4 18-8-4zM2524 1504l18-8-2 12-12 6zM2540 1552l8-14 6 2-6 22-8 0zM2510 1586l10-2 4 8-14 2zM2546 1586l12-6v12z"/><path fill="#2a3244" d="M2526 1520l14 10-6 20-10 2zM2482 1484l14-4-8 22z"/><rect x="2478" y="1470" width="82" height="4" fill="#5b5b5d"/></svg>`);

fits.forEach(run => run());
</script>
</body>
</html>
